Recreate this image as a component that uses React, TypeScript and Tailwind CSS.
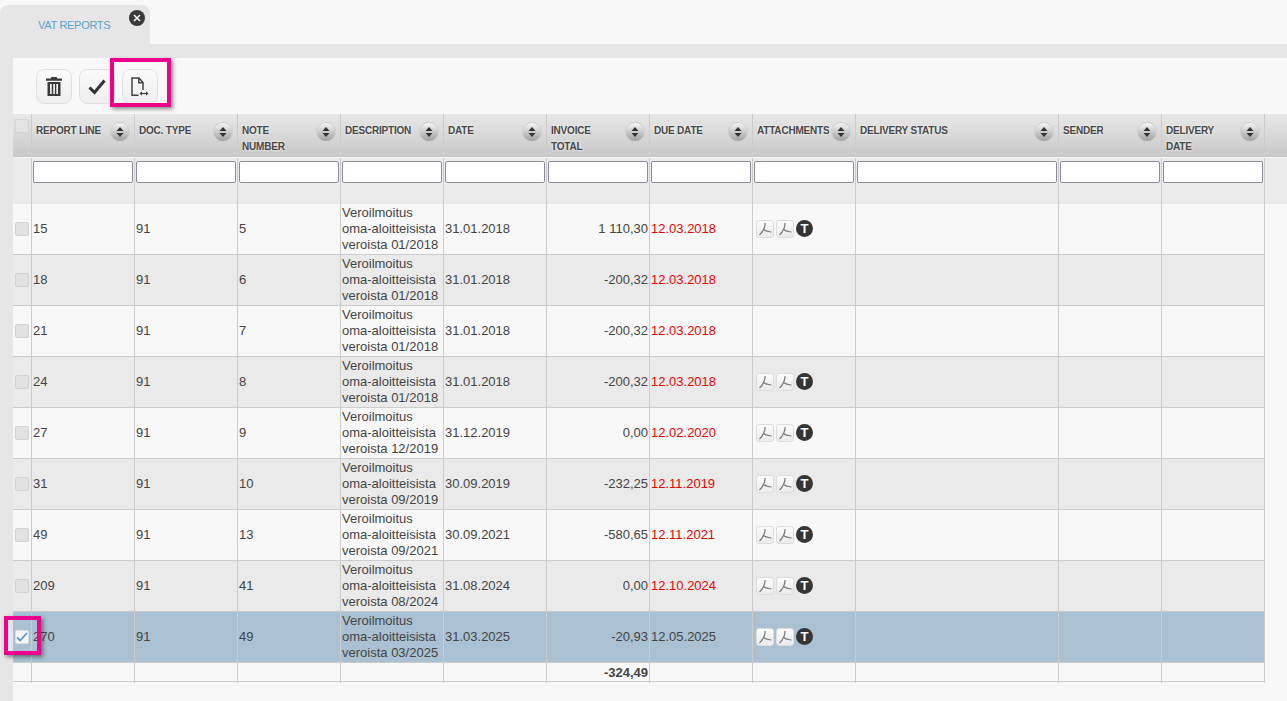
import React from 'react';

const gridCols = 'grid grid-cols-[19px_repeat(8,103px)_203px_103px_103px]';

const columns = [
  'Report line',
  'Doc. type',
  'Note\nnumber',
  'Description',
  'Date',
  'Invoice\ntotal',
  'Due date',
  'Attachments',
  'Delivery status',
  'Sender',
  'Delivery\ndate',
];

interface ReportRow {
  line: string;
  note: string;
  period: string;
  date: string;
  total: string;
  due: string;
  files: boolean;
  selected?: boolean;
}

const rows: ReportRow[] = [
  { line: '15', note: '5', period: '01/2018', date: '31.01.2018', total: '1 110,30', due: '12.03.2018', files: true },
  { line: '18', note: '6', period: '01/2018', date: '31.01.2018', total: '-200,32', due: '12.03.2018', files: false },
  { line: '21', note: '7', period: '01/2018', date: '31.01.2018', total: '-200,32', due: '12.03.2018', files: false },
  { line: '24', note: '8', period: '01/2018', date: '31.01.2018', total: '-200,32', due: '12.03.2018', files: true },
  { line: '27', note: '9', period: '12/2019', date: '31.12.2019', total: '0,00', due: '12.02.2020', files: true },
  { line: '31', note: '10', period: '09/2019', date: '30.09.2019', total: '-232,25', due: '12.11.2019', files: true },
  { line: '49', note: '13', period: '09/2021', date: '30.09.2021', total: '-580,65', due: '12.11.2021', files: true },
  { line: '209', note: '41', period: '08/2024', date: '31.08.2024', total: '0,00', due: '12.10.2024', files: true },
  { line: '270', note: '49', period: '03/2025', date: '31.03.2025', total: '-20,93', due: '12.05.2025', files: true, selected: true },
];

const TrashIcon = () => (
  <svg width="16" height="19" viewBox="0 0 16 19" fill="#3a3a3a">
    <path d="M5.500 0h5l.8 1.600H16v2.200H0V1.600h4.700z" />
    <path fillRule="evenodd" d="M1.500 5h13v14h-13zM4 7v10h1.700V7zM7.200 7v10h1.700V7zM10.300 7v10H12V7z" />
  </svg>
);

const CheckIcon = () => (
  <svg width="18" height="16" viewBox="0 0 18 16" fill="none" stroke="#333" strokeWidth="3">
    <path d="M1.500 8.500 6.500 13.500 16.500 1.500" />
  </svg>
);

const ExportIcon = () => (
  <svg width="18" height="20" viewBox="0 0 18 20" fill="none" stroke="#444" strokeWidth="1.500">
    <path d="M7.500 18.200H1V1h7L12 5.500V13" />
    <path d="M7.800 1v4.700H12" />
    <path d="M9.500 16.500H16.500" strokeWidth="1.200" />
    <path d="M11 14.300 8.500 16.500 11 18.700zM15 14.300l2.500 2.200L15 18.700z" fill="#444" stroke="none" />
  </svg>
);

const SortButton = () => (
  <div className="flex h-5 w-5 shrink-0 items-center justify-center rounded-full border border-[#cfcfcf] bg-gradient-to-b from-[#f6f6f6] to-[#a0a0a0]">
    <svg width="8" height="10" viewBox="0 0 8 10" fill="#333">
      <path d="M4 0 7.500 4H.5zM4 10 .5 6h7z" />
    </svg>
  </div>
);

const PdfButton = () => (
  <div className="flex h-[18px] w-[18px] items-center justify-center rounded-[3px] border border-[#dddddd] bg-gradient-to-b from-[#fbfbfb] to-[#ececec]">
    <svg width="14" height="14" viewBox="0 0 14 14" fill="none" stroke="#777777" strokeWidth="1.200">
      <path d="M7 1C7.500 4 5 10 1.500 13" />
      <path d="M5.500 7.500C8 9.500 11 9.500 13.500 10" />
    </svg>
  </div>
);

const TextBadge = () => (
  <div className="flex h-[17px] w-[17px] items-center justify-center rounded-full bg-[#353535] text-[13px] font-bold leading-none text-white">
    T
  </div>
);

const Cell: React.FC<{ className?: string; children?: React.ReactNode }> = ({ className = '', children }) => (
  <div className={`flex items-center border-r border-[#cccccc] pl-px ${className}`}>{children}</div>
);

const DataRow: React.FC<{ row: ReportRow; shaded: boolean }> = ({ row, shaded }) => {
  const bg = row.selected ? 'bg-[#a9c1d2]' : shaded ? 'bg-[#eaeaea]' : 'bg-[#f8f8f8]';
  return (
    <div className={`${gridCols} h-[51px] w-fit border-b border-[#cccccc] text-[13px] leading-4 text-[#444444] ${bg}`}>
      <Cell className="!pl-0.5">
        {row.selected ? (
          <div className="flex h-[14px] w-[14px] items-center justify-center rounded-[2px] border border-[#dddddd] bg-[#f5f5f5]">
            <svg width="12" height="10" viewBox="0 0 12 10" fill="none" stroke="#5e97bd" strokeWidth="1.800">
              <path d="M1 5.500 4.200 8.500 11 1" />
            </svg>
          </div>
        ) : (
          <div className="h-[14px] w-[14px] rounded-[2px] border border-[#d2d2d2] bg-[#e2e2e2]" />
        )}
      </Cell>
      <Cell>{row.line}</Cell>
      <Cell>91</Cell>
      <Cell>{row.note}</Cell>
      <Cell>
        <span>
          Veroilmoitus
          <br />
          oma-aloitteisista
          <br />
          veroista {row.period}
        </span>
      </Cell>
      <Cell>{row.date}</Cell>
      <Cell className="justify-end pr-px">{row.total}</Cell>
      <Cell className={row.selected ? '' : 'text-[#f00000]'}>{row.due}</Cell>
      <Cell className="gap-0.5 !pl-[3px] pb-px">
        {row.files && (
          <>
            <PdfButton />
            <PdfButton />
            <TextBadge />
          </>
        )}
      </Cell>
      <Cell />
      <Cell />
      <Cell />
    </div>
  );
};

export default function App() {
  return (
    <div className="relative h-[701px] w-full overflow-hidden bg-[#f8f8f8] font-['Liberation_Sans',Arial,sans-serif]">
      <div className="flex h-11 items-end">
        <div className="relative flex h-[39px] w-[150px] items-center rounded-t-lg bg-[#e6e6e6] pl-[38px] pt-0.5 text-[11px] tracking-[-0.3px] uppercase text-[#5ba3c9]">
          VAT reports
          <div className="absolute right-[5px] top-[5px] flex h-4 w-4 items-center justify-center rounded-full bg-[#3a3a3a]">
            <svg width="8" height="8" viewBox="0 0 8 8" stroke="#fff" strokeWidth="1.500">
              <path d="M1 1l6 6M7 1 1 7" />
            </svg>
          </div>
        </div>
      </div>
      <div className="h-[14px] bg-[#e6e6e6]" />
      <div className="flex h-[643px]">
        <div className="w-[13px] bg-[#e6e6e6]" />
        <div className="min-w-0 flex-1">
          <div className="flex h-14 gap-[7px] pl-[23px] pt-[11px]">
            {[<TrashIcon key="trash" />, <CheckIcon key="check" />, <ExportIcon key="export" />].map((icon, i) => (
              <div
                key={i}
                className="flex h-[35px] w-9 items-center justify-center rounded-lg border border-[#e0e0e0] bg-gradient-to-b from-[#fafafa] to-[#efefef]"
              >
                {icon}
              </div>
            ))}
          </div>

          <div className="h-[43px] bg-gradient-to-b from-[#e8e8e8] to-[#c8c8c8]">
            <div className={`${gridCols} h-full w-fit`}>
              <div className="border-r border-[#cccccc] pl-0.5 pt-[5px]">
                <div className="h-[14px] w-[14px] rounded-[2px] border border-[#d4d4d4] bg-[#e4e4e4]" />
              </div>
              {columns.map((name) => (
                <div key={name} className="flex items-start justify-between border-r border-[#cccccc] pl-1 pr-1 pt-2">
                  <span className="mt-px min-w-0 overflow-hidden whitespace-pre-line text-[10px] font-bold uppercase leading-4 tracking-[-0.2px] text-[#484848] [text-shadow:0_0_3px_#ffffff]">
                    {name}
                  </span>
                  <SortButton />
                </div>
              ))}
            </div>
          </div>

          <div className="h-[47px] border-t border-[#f4f4f4] bg-[#ebebeb]">
            <div className={`${gridCols} h-full w-fit`}>
              <div className="border-r border-[#cccccc]" />
              {columns.map((name, i) => (
                <div key={name} className="border-r border-[#cccccc] pl-px pt-0.5">
                  <input className={`h-[22px] rounded-[2px] border border-[#8b8b9b] bg-white ${i === 8 ? 'w-[200px]' : 'w-[100px]'}`} />
                </div>
              ))}
            </div>
          </div>

          {rows.map((row, i) => (
            <DataRow key={row.line} row={row} shaded={i % 2 === 1} />
          ))}

          <div className={`${gridCols} h-[19px] w-fit border-b border-[#cccccc] text-[13px] font-bold text-[#444444]`}>
            <Cell />
            <Cell />
            <Cell />
            <Cell />
            <Cell />
            <Cell />
            <Cell className="justify-end pr-px">-324,49</Cell>
            <Cell />
            <Cell />
            <Cell />
            <Cell />
            <Cell />
          </div>
        </div>
      </div>

      {/* pink annotation boxes */}
      <div className="absolute left-[110px] top-[58px] h-[49px] w-[61px] border-[4px] border-[#ec008c] shadow-[2px_2px_4px_rgba(0,0,0,0.45)]" />
      <div className="absolute left-1 top-[616px] h-[39px] w-[37px] border-[4px] border-[#ec008c] shadow-[2px_2px_4px_rgba(0,0,0,0.45)]" />
    </div>
  );
}
